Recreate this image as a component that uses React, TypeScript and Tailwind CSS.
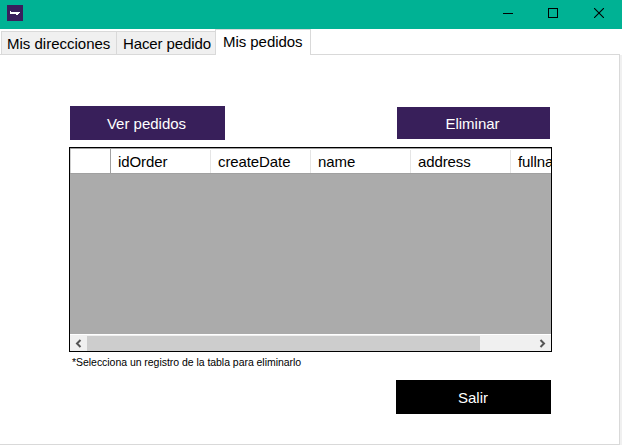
const columns = ["idOrder", "createDate", "name", "address"];

function TitleBar() {
  return (
    <header className="flex h-[29px] shrink-0 justify-between bg-[#00b294]">
      <div className="mt-[5px] ml-[7px] flex h-4 w-4 justify-center bg-[#3a1f5c] pt-1.5">
        <svg width="10" height="4" viewBox="0 0 10 4" fill="white" shapeRendering="crispEdges">
          <path d="M0 0h1v1h9v1h-1v1h-1v1h-2v-1h-6z" />
        </svg>
      </div>
      <div className="flex pt-2 pr-[18px]">
        <svg className="mr-[35px]" width="10" height="10" shapeRendering="crispEdges">
          <path d="M0 5.5h10" stroke="black" />
        </svg>
        <svg className="mr-9" width="10" height="10" shapeRendering="crispEdges">
          <rect x=".5" y=".5" width="9" height="9" fill="none" stroke="black" />
        </svg>
        <svg width="10" height="10">
          <path d="M0 0l10 10M10 0L0 10" stroke="black" strokeWidth="1.1" />
        </svg>
      </div>
    </header>
  );
}

function Tabs() {
  return (
    <nav className="flex h-[26px] shrink-0 items-end leading-none">
      <div className="h-6 w-px border-b border-[#d9d9d9]" />
      <button className="h-6 w-[115px] border border-r-0 border-[#d9d9d9] bg-[#f0f0f0] pl-[5px] text-left whitespace-nowrap">
        Mis direcciones
      </button>
      <button className="h-6 w-[99px] border border-r-0 border-[#d9d9d9] bg-[#f0f0f0] pl-[6px] text-left tracking-[-0.1px] whitespace-nowrap">
        Hacer pedido
      </button>
      <button className="h-[26px] w-[96px] border border-b-0 border-[#d9d9d9] pb-[2px] pl-[7px] text-left tracking-[-0.05px] whitespace-nowrap">
        Mis pedidos
      </button>
      <div className="h-px w-[309px] bg-[#d9d9d9]" />
    </nav>
  );
}

function Grid() {
  return (
    <div className="mt-[7px] ml-[69px] flex h-[205px] w-[483px] flex-col border border-black bg-[#ababab]">
      <div className="flex h-[26px] shrink-0 overflow-hidden border-t border-b border-[#a0a0a0] bg-white leading-[25px]">
        <div className="w-[41px] shrink-0 border-r border-l border-r-[#a0a0a0] border-l-[#d0d0d0]" />
        {columns.map((name) => (
          <div key={name} className="mt-px w-[100px] shrink-0 border-r border-[#e5e5e5] pl-[7px] leading-[23px] tracking-[-0.1px]">
            {name}
          </div>
        ))}
        <div className="mt-px shrink-0 pl-[7px] leading-[23px] tracking-[-0.1px]">fullna</div>
      </div>
      <div className="flex-1" />
      <div className="flex h-[17px] shrink-0 items-center justify-between border-t border-white bg-[#f0f0f0]">
        <svg width="17" height="15">
          <path d="M10.500 4L7 7.500l3.500 3.500" fill="none" stroke="#555" strokeWidth="2" />
        </svg>
        <div className="h-[15px] w-[393px] bg-[#cdcdcd]" />
        <div className="flex-1" />
        <svg width="17" height="15">
          <path d="M6.500 4L10 7.500l-3.500 3.500" fill="none" stroke="#555" strokeWidth="2" />
        </svg>
      </div>
    </div>
  );
}

export default function App() {
  return (
    <div className="flex h-[445px] w-[622px] flex-col overflow-hidden bg-white font-['Liberation_Sans',Arial,sans-serif] text-[15px] text-black">
      <TitleBar />
      <Tabs />
      <div className="flex flex-1 border-r-2 border-[#f0f0f0]">
        <main className="flex-1 border-r border-b border-[#d9d9d9]">
          <div className="flex h-[85px] items-end pl-[70px]">
            <button className="h-[34px] w-[155px] bg-[#381f5a] pt-[2px] pr-[2px] text-white">Ver pedidos</button>
            <button className="mb-px ml-[172px] h-8 w-[153px] bg-[#381f5a] pt-[2px] pr-[2px] text-white">Eliminar</button>
          </div>
          <Grid />
          <p className="ml-[72px] h-7 pt-[3px] text-[10.500px] leading-[14px] tracking-[-0.04px] whitespace-nowrap">
            *Selecciona un registro de la tabla para eliminarlo
          </p>
          <button className="ml-[396px] block h-[34px] w-[155px] bg-black pt-[2px] pr-[1px] text-white">Salir</button>
        </main>
      </div>
    </div>
  );
}
